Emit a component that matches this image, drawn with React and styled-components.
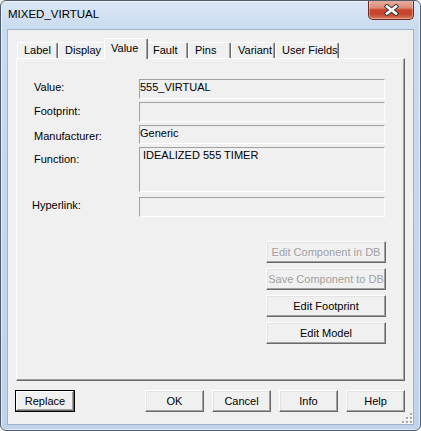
import React from 'react';
import styled, { createGlobalStyle, css } from 'styled-components';

const Global = createGlobalStyle`
  html, body { margin: 0; padding: 0; background: #ffffff; }
  body { font-family: "Liberation Sans", Arial, sans-serif; font-size: 11px; color: #000; }
  #root { width: 421px; height: 431px; }
`;

const Window = styled.div`
  box-sizing: border-box;
  width: 421px;
  height: 431px;
  border: 1px solid #4e5c6e;
  border-radius: 6px;
  background: linear-gradient(to bottom, #dbe7f5 0px, #c9dbef 28px, #bfd3eb 100%);
  box-shadow: inset 0 0 0 1px rgba(255, 255, 255, 0.55);
  display: flex;
  flex-direction: column;
  overflow: hidden;
`;

const TitleBar = styled.div`
  height: 28px;
  flex: none;
  display: flex;
  align-items: flex-start;
  justify-content: space-between;
  padding-left: 7px;
`;

const Title = styled.div`
  font-size: 11.5px;
  line-height: 13px;
  margin-top: 7px;
  color: #000;
`;

const CloseButton = styled.div`
  box-sizing: border-box;
  width: 46px;
  height: 20px;
  margin-top: -1px;
  margin-right: 6px;
  border: 1px solid #6a2a1f;
  border-top: none;
  border-radius: 0 0 5px 5px;
  background: linear-gradient(to bottom, #eab2a4 0%, #dc8b75 42%, #c7452b 52%, #c4462d 75%, #da7c60 100%);
  box-shadow: inset 0 0 0 1px rgba(255, 255, 255, 0.35);
  display: flex;
  align-items: center;
  justify-content: center;
`;

const Client = styled.div`
  flex: 1;
  margin: 0 6px 5px;
  border: 1px solid #9fb2c8;
  background: #f0f0f0;
  display: flex;
  flex-direction: column;
  padding: 8px 8px 0;
  position: relative;
`;

const TabStrip = styled.div`
  display: flex;
  align-items: flex-end;
  height: 20px;
  flex: none;
  padding-left: 1px;
  position: relative;
  z-index: 1;
`;

const Tab = styled.div`
  box-sizing: border-box;
  flex: none;
  width: ${(p) => p.$w}px;
  height: 16px;
  border: 1px solid #fff;
  border-bottom: none;
  border-right-color: #696969;
  border-radius: 2px 2px 0 0;
  box-shadow: inset -1px 0 #a0a0a0;
  background: #f0f0f0;
  padding-left: 6px;
  line-height: 15px;
  white-space: nowrap;
  ${(p) =>
    p.$active &&
    css`
      width: ${p.$w + 4}px;
      height: 21px;
      margin: 0 -2px -1px;
      position: relative;
      z-index: 2;
      line-height: 18px;
    `}
`;

const Panel = styled.div`
  box-sizing: border-box;
  height: 323px;
  flex: none;
  border: 1px solid;
  border-color: #fff #696969 #696969 #fff;
  box-shadow: inset -1px -1px #a0a0a0;
  padding: 20px 19px 0 17px;
  display: flex;
  flex-direction: column;
`;

const FieldRow = styled.div`
  display: flex;
  margin-top: ${(p) => p.$mt || 0}px;
`;

const Label = styled.div`
  flex: none;
  width: ${(p) => 105 - (p.$ml || 0)}px;
  margin-left: ${(p) => p.$ml || 0}px;
  padding-top: ${(p) => p.$pt}px;
  line-height: 13px;
`;

const Field = styled.div`
  box-sizing: border-box;
  flex: 1;
  height: ${(p) => p.$h}px;
  border-top: 1px solid #a0a0a0;
  border-left: 1px solid #a0a0a0;
  border-right: 1px solid #fff;
  border-bottom: 1px solid #fff;
  padding: 1px ${(p) => p.$px || 0}px 0;
  line-height: 13px;
  white-space: nowrap;
  overflow: hidden;
`;

const ButtonColumn = styled.div`
  display: flex;
  flex-direction: column;
  align-items: flex-end;
  gap: 5px;
  margin-top: 24px;
  margin-right: -1px;
`;

const Button = styled.button`
  box-sizing: border-box;
  flex: none;
  width: ${(p) => p.$w}px;
  height: 22px;
  padding: 0;
  margin: 0;
  font: 11px "Liberation Sans", Arial, sans-serif;
  color: ${(p) => (p.disabled ? '#a0a0a0' : '#000')};
  background: #f0f0f0;
  border: 1px solid;
  border-color: #fff #696969 #696969 #fff;
  box-shadow: inset -1px -1px #a0a0a0, inset 1px 1px #e3e3e3;
  white-space: nowrap;
  ${(p) =>
    p.$default &&
    css`
      border-color: #000;
      box-shadow: inset -1px -1px #696969, inset 1px 1px #fff, inset -2px -2px #a0a0a0;
    `}
`;

const Footer = styled.div`
  display: flex;
  flex: none;
  gap: 8px;
  margin: 9px 0 0 -1px;
`;

const Spacer = styled.div`
  flex: 1;
`;

const Grip = styled.svg`
  position: absolute;
  right: 0;
  bottom: 0;
`;

const tabs = [
  ['Label', 41],
  ['Display', 48],
  ['Value', 40],
  ['Fault', 42],
  ['Pins', 43],
  ['Variant', 44],
  ['User Fields', 64],
];

const rows = [
  { label: 'Value:', value: '555_VIRTUAL', h: 20, mt: 0, pt: 2 },
  { label: 'Footprint:', value: '', h: 20, mt: 3, pt: 3 },
  { label: 'Manufacturer:', value: 'Generic', h: 19, mt: 3, pt: 5 },
  { label: 'Function:', value: 'IDEALIZED 555 TIMER', h: 45, mt: 3, pt: 6, px: 3 },
  { label: 'Hyperlink:', value: '', h: 20, mt: 5, pt: 2, ml: -2 },
];

const gripDots = [
  [9, 1],
  [5, 5],
  [9, 5],
  [1, 9],
  [5, 9],
  [9, 9],
];

export default function App() {
  return (
    <>
      <Global />
      <Window>
        <TitleBar>
          <Title>MIXED_VIRTUAL</Title>
          <CloseButton>
            <svg width="15" height="12" viewBox="0 0 15 12">
              <path d="M3 2.5 L12 9.5 M12 2.5 L3 9.5" stroke="#3a3a3a" strokeWidth="4.6" strokeLinecap="square" fill="none" />
              <path d="M3 2.5 L12 9.5 M12 2.5 L3 9.5" stroke="#ffffff" strokeWidth="2.6" strokeLinecap="square" fill="none" />
            </svg>
          </CloseButton>
        </TitleBar>
        <Client>
          <TabStrip>
            {tabs.map(([name, w]) => (
              <Tab key={name} $w={w} $active={name === 'Value'}>
                {name}
              </Tab>
            ))}
          </TabStrip>
          <Panel>
            {rows.map((r) => (
              <FieldRow key={r.label} $mt={r.mt}>
                <Label $pt={r.pt} $ml={r.ml}>{r.label}</Label>
                <Field $h={r.h} $px={r.px}>{r.value}</Field>
              </FieldRow>
            ))}
            <ButtonColumn>
              <Button $w={120} disabled>Edit Component in DB</Button>
              <Button $w={120} disabled>Save Component to DB</Button>
              <Button $w={120}>Edit Footprint</Button>
              <Button $w={120}>Edit Model</Button>
            </ButtonColumn>
          </Panel>
          <Footer>
            <Button $w={60} $default>Replace</Button>
            <Spacer />
            <Button $w={59}>OK</Button>
            <Button $w={59}>Cancel</Button>
            <Button $w={59}>Info</Button>
            <Button $w={59}>Help</Button>
          </Footer>
          <Grip width="12" height="12" viewBox="0 0 12 12">
            {gripDots.map(([x, y]) => (
              <g key={`${x}-${y}`}>
                <rect x={x + 1} y={y + 1} width="2" height="2" fill="#ffffff" />
                <rect x={x} y={y} width="2" height="2" fill="#a8a8a8" />
              </g>
            ))}
          </Grip>
        </Client>
      </Window>
    </>
  );
}
